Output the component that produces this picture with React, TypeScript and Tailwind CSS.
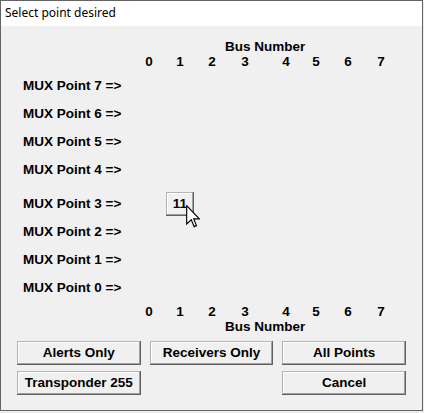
import React from "react";

const BUSES = [0, 1, 2, 3, 4, 5, 6, 7];

// Bus digits under/over the matrix; each digit sits in a 32px slot
const BusDigits: React.FC = () => (
  <div className="grid h-[15px] grid-cols-[132px_31px_32px_33px_41px_30px_32px_33px_32px] leading-4">
    <div />
    {BUSES.map((n) => (
      <div key={n} className="flex">
        <span className="w-8 shrink-0 text-center">{n}</span>
      </div>
    ))}
  </div>
);

const BusTitle: React.FC = () => (
  <div className="h-[15px] pl-[224px] leading-4">Bus Number</div>
);

// Classic windows arrow cursor
const Cursor: React.FC = () => (
  <svg
    className="absolute left-[22px] top-[13px]"
    width="14"
    height="23"
    viewBox="0 0 12 20"
  >
    <path
      d="M0.5 0.5 L0.5 16.5 L4.5 12.8 L7 18.8 L9 17.9 L6.6 12 L11.5 12 Z"
      fill="#ffffff"
      stroke="#000000"
      strokeWidth="1"
      strokeLinejoin="miter"
    />
  </svg>
);

const MuxRow: React.FC<{ point: number; children?: React.ReactNode }> = ({
  point,
  children,
}) => (
  <div className="grid h-7 grid-cols-[132px_31px_32px_33px_41px_30px_32px_33px_32px] items-center">
    <span className="whitespace-nowrap pl-[22px] leading-4">
      MUX Point {point} =&gt;
    </span>
    {children}
  </div>
);

const WinButton: React.FC<{ label: string; className?: string }> = ({
  label,
  className = "",
}) => (
  <button
    className={`h-6 bg-[#f0f0f0] leading-4 text-black shadow-[inset_-1px_-1px_0_#5f5f5f,inset_1px_1px_0_#b4b4b4,inset_-2px_-2px_0_#a0a0a0,inset_2px_2px_0_#ffffff] ${className}`}
  >
    {label}
  </button>
);

export default function App() {
  return (
    <div className="h-[413px] w-[424px] bg-[#ececec]">
      <div className="flex h-[411px] w-[423px] flex-col border border-[#646464] bg-[#f0f0f0] font-['Liberation_Sans',Arial,sans-serif] text-[13.5px] font-bold text-black">
        <div className="h-[25px] shrink-0 bg-white pl-1 pt-[4px] font-['Noto_Sans',sans-serif] text-[12px] font-normal leading-4">
          Select point desired
        </div>

        <div className="mt-[13px]">
          <BusTitle />
          <BusDigits />
        </div>

        <div className="mt-[3px]">
          <MuxRow point={7} />
          <MuxRow point={6} />
          <MuxRow point={5} />
          <MuxRow point={4} />
        </div>

        <div className="mt-[6px]">
          <MuxRow point={3}>
            <div className="col-start-3 flex">
              <div className="relative flex w-8 shrink-0 justify-center">
                <WinButton label="11" className="w-7" />
                <Cursor />
              </div>
            </div>
          </MuxRow>
          <MuxRow point={2} />
          <MuxRow point={1} />
          <MuxRow point={0} />
        </div>

        <div className="mt-[2px]">
          <BusDigits />
          <BusTitle />
        </div>

        <div className="mt-[7px] grid grid-cols-3 gap-x-[9px] gap-y-[6px] px-4">
          <WinButton label="Alerts Only" />
          <WinButton label="Receivers Only" />
          <WinButton label="All Points" />
          <WinButton label="Transponder 255" />
          <div />
          <WinButton label="Cancel" />
        </div>
      </div>
    </div>
  );
}
